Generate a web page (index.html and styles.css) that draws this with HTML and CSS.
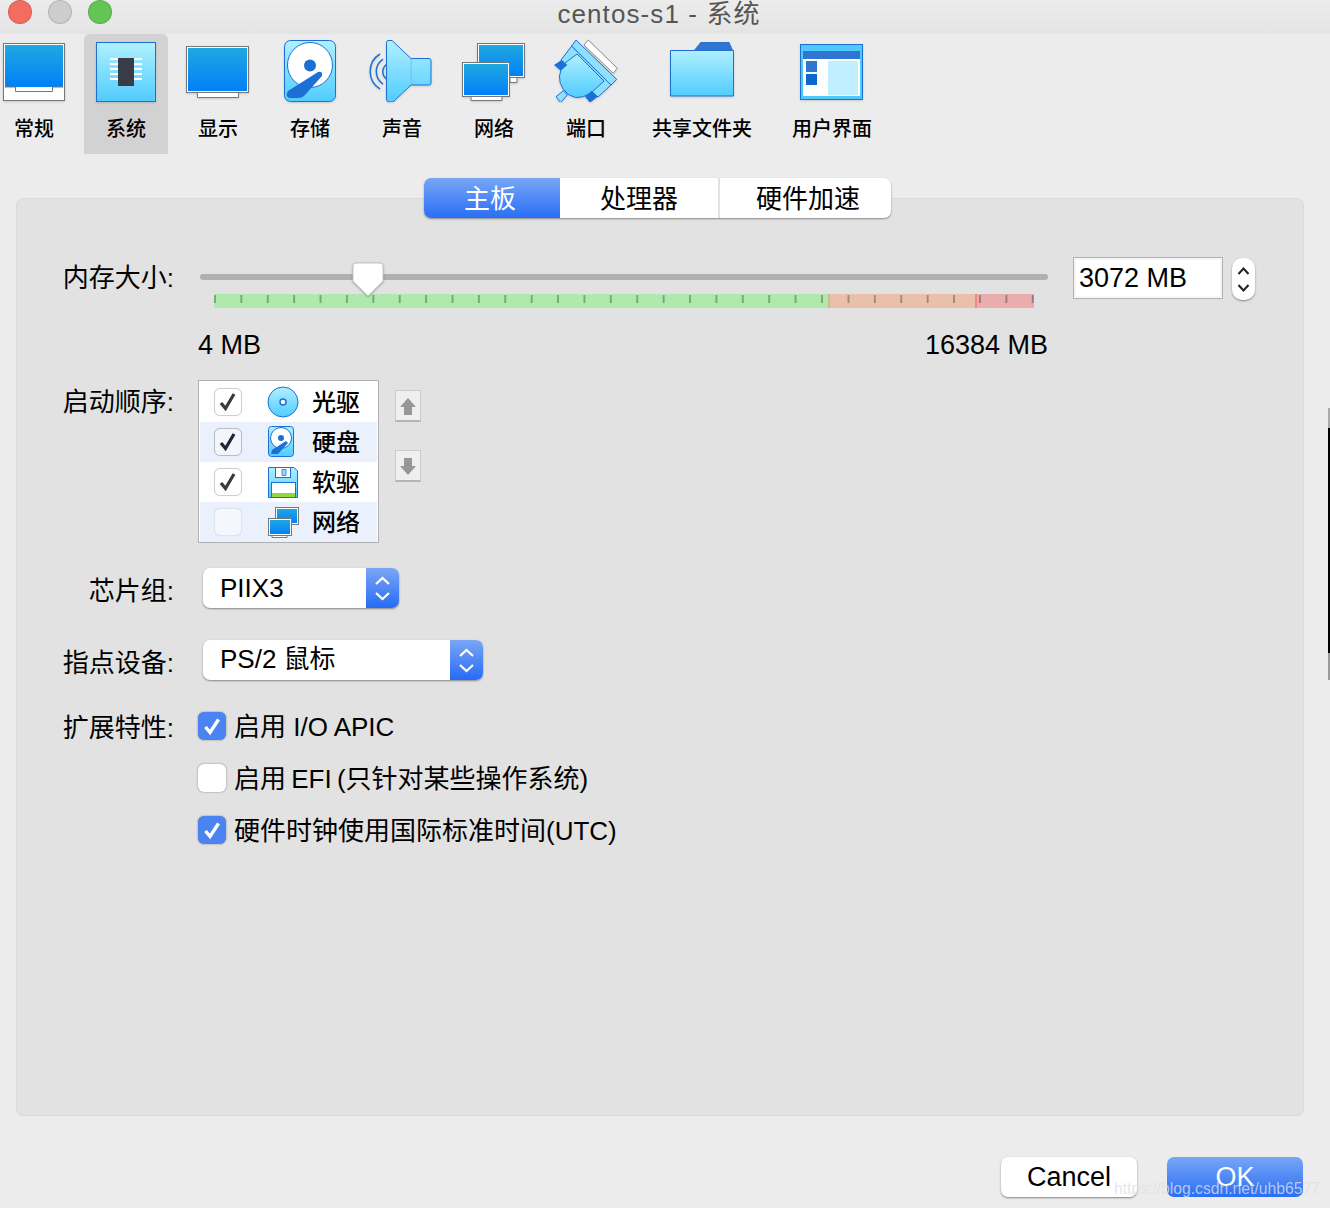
FILE: index.html
```html
<!DOCTYPE html>
<html lang="zh">
<head>
<meta charset="utf-8">
<title>centos-s1 - 系统</title>
<link rel="stylesheet" href="styles.css">
</head>
<body>
<div class="window">
  <header class="titlebar">
    <div class="lights"><i class="light red"></i><i class="light gray"></i><i class="light green"></i></div>
    <div class="title">centos-s1 - 系统</div>
  </header>

  <nav class="toolbar">
    <div class="tool">
      <svg class="ticon" viewBox="0 0 84 68"><defs><linearGradient id="scr" x1="0" y1="0" x2="0" y2="1"><stop offset="0" stop-color="#20a8e0"/><stop offset="1" stop-color="#0080f8"/></linearGradient></defs>
        <rect x="11.500" y="9.500" width="61" height="57" fill="#fff" stroke="#777"/><rect x="13" y="11" width="58" height="42" fill="url(#scr)"/><path d="M13 53H23.500V57.500H60.500V53H71" fill="none" stroke="#777"/></svg>
      <span>常规</span>
    </div>
    <div class="tool active">
      <svg class="ticon" viewBox="0 0 84 68"><defs><linearGradient id="lb" x1="0" y1="0" x2="0" y2="1"><stop offset="0" stop-color="#b0f0ff"/><stop offset="1" stop-color="#50ccff"/></linearGradient></defs>
        <rect x="12.500" y="8.500" width="59" height="59" fill="url(#lb)" stroke="#1c6fd4"/>
        <path d="M26 25H58M26 30H58M26 35H58M26 40H58M26 45H58" stroke="#fff" stroke-width="2"/><rect x="34" y="24" width="16" height="28" fill="#383c46"/></svg>
      <span>系统</span>
    </div>
    <div class="tool">
      <svg class="ticon" viewBox="0 0 84 68"><path d="M21.500 58.500V63.500H62.500V58.500" fill="#fff" stroke="#777"/><rect x="10.500" y="12.500" width="62" height="46" fill="#fff" stroke="#777"/><rect x="12" y="14" width="59" height="43" fill="url(#scr)"/></svg>
      <span>显示</span>
    </div>
    <div class="tool">
      <svg class="ticon" viewBox="0 0 84 68"><rect x="16.500" y="6.500" width="51" height="61" rx="6" fill="url(#lb)" stroke="#1c6fd4"/><circle cx="42" cy="31" r="22.500" fill="#fff" stroke="#1c6fd4"/><circle cx="42" cy="31.500" r="6" fill="#1c6fd4"/><path d="M21 64Q17 62 20 57L50 38Q55 37 54 42L36 62Q34 64 30 64Z" fill="#1c6fd4"/></svg>
      <span>存储</span>
    </div>
    <div class="tool">
      <svg class="ticon" viewBox="0 0 84 68"><path d="M28 6.500L32 6.500L51 24.500H69Q71 24.500 71 26.500V49Q71 51 69 51H51L33 68L29 68Q26.500 67.500 26.500 65.500V8.500Q26.500 7 28 6.500Z" fill="url(#lb)" stroke="#1c6fd4"/><path d="M51 24.500V51" stroke="#6fc0ee"/><path d="M20 20A20.500 20.500 0 0 0 20 55M23 25A15 15 0 0 0 23 50M26.500 30.500A9 9 0 0 0 26.500 45" fill="none" stroke="#1c6fd4" stroke-width="1.500"/></svg>
      <span>声音</span>
    </div>
    <div class="tool">
      <svg class="ticon" viewBox="0 0 84 68"><path d="M58 43.500V48.500H65V43.500" fill="#fff" stroke="#777"/><rect x="25.500" y="9.500" width="47" height="34" fill="#fff" stroke="#777"/><rect x="27" y="11" width="44" height="31" fill="url(#scr)"/><path d="M19 62.500V66.500H50V62.500" fill="#fff" stroke="#777"/><rect x="10.500" y="28.500" width="47" height="34" fill="#fff" stroke="#777"/><rect x="12" y="30" width="44" height="31" fill="url(#scr)"/></svg>
      <span>网络</span>
    </div>
    <div class="tool">
      <svg class="ticon" viewBox="0 0 84 68"><path d="M44.300 6L73.300 34.300L69.300 39.300L40 11Z" fill="#fff" stroke="#8a8a8a"/><path d="M12 62.700L19.300 56.700L23.300 61L16.700 68.500Z" fill="#8fe0ff" stroke="#1c6fd4"/><path d="M17 26L27.700 12L67 51L54 63L46 56L23 36Z" fill="#8fe0ff" stroke="#1c6fd4"/><path d="M33 20L60 47L47 59Q30 70 19 55Q11 42 21 29Z" fill="url(#lb)" stroke="#1c6fd4"/><path d="M32 6L72.700 45.300L67 51L27.700 12Z" fill="#8fe0ff" stroke="#1c6fd4"/><path d="M10 31L17.700 26L23.300 31L16.700 36.700ZM41 62.700L47.700 56.700L53.700 62.700L46 68.700Z" fill="#1c6fd4"/></svg>
      <span>端口</span>
    </div>
    <div class="tool">
      <svg class="ticon" viewBox="0 0 132 68"><path d="M57 17.500L64.700 8H93.300L97.500 17.500Z" fill="#2f76d2"/><path d="M34.500 16.500H97.500V62H34.500Z" fill="url(#lb)" stroke="#1c6fd4"/></svg>
      <span>共享文件夹</span>
    </div>
    <div class="tool">
      <svg class="ticon" viewBox="0 0 112 68"><rect x="24.500" y="10.500" width="62" height="55" fill="#50c8fa" stroke="#1c6fd4"/><rect x="27" y="17" width="57" height="45" fill="#fff"/><rect x="27" y="17" width="57" height="8" fill="#2f76d2"/><rect x="30" y="27" width="11" height="11" fill="#2f76d2"/><rect x="30" y="40" width="11" height="11" fill="#0c66d0"/><rect x="52" y="27" width="30" height="34" fill="#c0f0ff"/></svg>
      <span>用户界面</span>
    </div>
  </nav>

  <section class="panel">
    <div class="tabs">
      <div class="tab sel">主板</div>
      <div class="tab t2">处理器</div>
      <div class="tab t3">硬件加速</div>
    </div>

    <div class="form">
      <div class="row mem">
        <label class="lbl">内存大小:</label>
        <div class="mem-body">
          <div class="slider">
            <div class="track"></div>
            <svg class="thumb" viewBox="0 0 32 36"><path d="M1 4Q1 1 4 1H28Q31 1 31 4V19L16 34L1 19Z" fill="#fff" stroke="#c4c4c4"/></svg>
            <div class="zones"><i class="z g"></i><i class="z o"></i><i class="z r"></i></div>
          </div>
          <div class="spin">
            <div class="field">3072 MB</div>
            <div class="stepper"><svg viewBox="0 0 23 42"><path d="M6.500 16L11.500 10.500L16.500 16M6.500 27L11.500 32.500L16.500 27" fill="none" stroke="#222" stroke-width="2"/></svg></div>
          </div>
        </div>
      </div>
      <div class="range"><span>4 MB</span><span>16384 MB</span></div>

      <div class="row boot">
        <label class="lbl">启动顺序:</label>
        <div class="bootlist">
          <div class="bootrow"><i class="cb"><svg viewBox="0 0 28 28"><path d="M7 15L11.500 20.500L20 6" fill="none" stroke="#3a3a40" stroke-width="3.200"/></svg></i>
            <svg class="bi" viewBox="0 0 32 32"><defs><linearGradient id="lb2" x1="0" y1="0" x2="0" y2="1"><stop offset="0" stop-color="#b0f0ff"/><stop offset="1" stop-color="#50ccff"/></linearGradient></defs><circle cx="16" cy="16" r="15" fill="url(#lb2)" stroke="#1c6fd4"/><circle cx="16" cy="16" r="3" fill="#fff" stroke="#1c6fd4" stroke-width="1.500"/></svg><span>光驱</span></div>
          <div class="bootrow alt"><i class="cb dark"><svg viewBox="0 0 28 28"><path d="M7 15L11.500 20.500L20 6" fill="none" stroke="#22253a" stroke-width="3.200"/></svg></i>
            <svg class="bi" viewBox="0 0 32 32"><rect x="1.500" y="0.500" width="25" height="30" rx="3" fill="url(#lb2)" stroke="#1c6fd4"/><circle cx="14" cy="12" r="10.500" fill="#fff" stroke="#1c6fd4"/><circle cx="14" cy="12" r="3" fill="#1c6fd4"/><path d="M4 28L5 24L19 15L21 17L11 28Z" fill="#1c6fd4"/></svg><span>硬盘</span></div>
          <div class="bootrow"><i class="cb"><svg viewBox="0 0 28 28"><path d="M7 15L11.500 20.500L20 6" fill="none" stroke="#3a3a40" stroke-width="3.200"/></svg></i>
            <svg class="bi" viewBox="0 0 32 32"><path d="M1.500 1.500H27L30.500 5V31.500H1.500Z" fill="url(#lb2)" stroke="#1c6fd4"/><rect x="8.500" y="1.500" width="15" height="10" fill="#fff" stroke="#1c6fd4"/><rect x="15" y="3.500" width="4" height="6" fill="#90d8f8" stroke="#1c6fd4" stroke-width=".7"/><rect x="4.500" y="16.500" width="24" height="15" fill="#fff" stroke="#1c6fd4"/><rect x="5" y="27" width="23" height="4" fill="#90d840"/></svg><span>软驱</span></div>
          <div class="bootrow alt"><i class="cb off"></i>
            <svg class="bi" viewBox="0 0 32 32"><rect x="8.500" y="1.500" width="23" height="17" fill="#fff" stroke="#777"/><rect x="10" y="3" width="20" height="14" fill="url(#scr)"/><path d="M5 29.500V31.500H20V29.500" fill="#fff" stroke="#777"/><rect x="1.500" y="12.500" width="23" height="17" fill="#fff" stroke="#777"/><rect x="3" y="14" width="20" height="14" fill="url(#scr)"/></svg><span>网络</span></div>
        </div>
        <div class="movers">
          <div class="mover"><svg viewBox="0 0 24 30"><path d="M12 7L20 16H16V24H8V16H4Z" fill="#97979a"/></svg></div>
          <div class="mover"><svg viewBox="0 0 24 30"><path d="M12 24L20 15H16V7H8V15H4Z" fill="#97979a"/></svg></div>
        </div>
      </div>

      <div class="row sel1">
        <label class="lbl">芯片组:</label>
        <div class="select s-chip"><span>PIIX3</span><b class="arrows"><svg viewBox="0 0 33 40"><path d="M10 16L16.500 10L23 16M10 25L16.500 31L23 25" fill="none" stroke="#fff" stroke-width="2.200"/></svg></b></div>
      </div>
      <div class="row sel2">
        <label class="lbl">指点设备:</label>
        <div class="select s-mouse"><span>PS/2 鼠标</span><b class="arrows"><svg viewBox="0 0 33 40"><path d="M10 16L16.500 10L23 16M10 25L16.500 31L23 25" fill="none" stroke="#fff" stroke-width="2.200"/></svg></b></div>
      </div>

      <div class="row ext">
        <label class="lbl">扩展特性:</label>
        <div class="checks">
          <div class="check"><i class="box on"><svg viewBox="0 0 28 28"><path d="M7.500 15L12 20.500L20.500 7.500" fill="none" stroke="#fff" stroke-width="3.400"/></svg></i><span>启用 I/O APIC</span></div>
          <div class="check"><i class="box"></i><span class="tight">启用 EFI (只针对某些操作系统)</span></div>
          <div class="check"><i class="box on"><svg viewBox="0 0 28 28"><path d="M7.500 15L12 20.500L20.500 7.500" fill="none" stroke="#fff" stroke-width="3.400"/></svg></i><span>硬件时钟使用国际标准时间(UTC)</span></div>
        </div>
      </div>
    </div>
  </section>

  <footer class="actions">
    <div class="btn">Cancel</div>
    <div class="btn primary">OK</div>
  </footer>
  <div class="watermark">https://blog.csdn.net/uhb6577</div>
  <i class="edge"></i>
</div>
</body>
</html>
```
FILE: styles.css
```css
* { box-sizing: border-box; }
html, body { margin: 0; padding: 0; }
body { width: 1330px; height: 1208px; overflow: hidden; background: #ececec; font-family: "Liberation Sans", "Noto Sans CJK SC", sans-serif; font-weight: 400; color: #000; }
.window { position: relative; width: 1330px; height: 1208px; display: flex; flex-direction: column; }
svg { display: block; }
i, b { display: block; font-style: normal; font-weight: 400; }

.titlebar { position: relative; height: 34px; flex: none; background: linear-gradient(#ececec, #e4e4e4); display: flex; justify-content: center; }
.lights { position: absolute; left: 8px; top: 0; display: flex; gap: 16px; }
.light { width: 24px; height: 24px; border-radius: 50%; border: 1px solid rgba(0,0,0,.12); }
.red { background: #f26d60; }
.gray { background: #cdcdcd; }
.green { background: #62c554; }
.title { font-size: 26px; line-height: 28px; color: #555; letter-spacing: 1.100px; margin-right: 12px; }

.toolbar { display: flex; gap: 8px; margin-left: -8px; height: 120px; flex: none; }
.tool { min-width: 84px; padding: 0 16px; height: 120px; display: flex; flex-direction: column; align-items: center; font-size: 20px; font-weight: 500; border-radius: 6px 6px 0 0; }
.tool span { margin-top: 13px; line-height: 28px; white-space: nowrap; }
.tool.active { background: #d2d2d2; }
.ticon { width: 84px; height: 68px; margin: 0 -16px; flex: none; filter: drop-shadow(0 1px 1px rgba(0,0,0,.14)); }
.tool:nth-child(8) .ticon { width: 132px; }
.tool:nth-child(9) .ticon { width: 112px; }

.panel { margin: 44px 26px 0 16px; height: 918px; flex: none; background: #e2e2e2; border: 1px solid #dadada; border-radius: 7px; display: flex; flex-direction: column; }
.tabs { display: flex; margin: -21px 0 0 407px; width: 467px; height: 40px; background: #fff; border-radius: 7px; box-shadow: 0 1px 2px rgba(0,0,0,.4); font-size: 26px; line-height: 42px; text-align: center; flex: none; }
.tab { height: 40px; }
.tab.sel { width: 136px; padding-right: 4px; color: #fff; background: linear-gradient(#78a6f6, #2a6ef5); border-radius: 7px 0 0 7px; }
.tab.t2 { width: 160px; border-right: 2px solid #e2e2e2; }
.tab.t3 { flex: 1; padding-left: 5px; }

.form { padding-left: 45px; }
.row { display: flex; }
.lbl { width: 112px; flex: none; text-align: right; font-size: 26px; line-height: 34px; white-space: nowrap; margin-right: 24px; }

.mem { margin-top: 40px; }
.mem .lbl { margin-top: 3px; }
.mem-body { display: flex; align-items: flex-start; }
.slider { position: relative; width: 848px; margin-left: 2px; margin-top: 16px; height: 34px; }
.track { height: 6px; background: #b0b0b0; border-radius: 3px; }
.thumb { position: absolute; left: 152px; top: -12px; width: 32px; height: 36px; filter: drop-shadow(0 1px 1px rgba(0,0,0,.25)); }
.zones { display: flex; height: 14px; margin: 14px 14px 0 14px; width: 820px; }
.z { height: 14px; background-repeat: repeat-x; background-position: 0 1px; background-size: 26.4px 8px; }
.g { width: 614px; background-color: #afe9ae; background-image: linear-gradient(90deg, #7aa87b 1.500px, transparent 1.500px); }
.o { width: 147px; background-color: #eac0ab; border-left: 2px solid #c4c08a; background-image: linear-gradient(90deg, #a08a80 1.500px, transparent 1.500px); background-position: 17.500px 1px; }
.r { width: 59px; background-color: #ebacad; border-left: 2px solid #f08a80; background-image: linear-gradient(90deg, #a07a7c 1.500px, transparent 1.500px); background-position: 2px 1px; }
.spin { display: flex; margin-left: 25px; margin-top: -1px; gap: 9px; }
.field { width: 150px; height: 42px; background: #fff; border: 1px solid #b2b2b2; font-size: 27px; line-height: 40px; padding-left: 5px; box-shadow: inset 0 0 0 2px #f6f6f6; }
.stepper { width: 23px; height: 42px; margin-top: 1px; background: #fff; border-radius: 10px; box-shadow: 0 1px 2px rgba(0,0,0,.4); }

.range { display: flex; justify-content: space-between; width: 850px; margin-left: 136px; margin-top: 20px; font-size: 27px; line-height: 34px; }

.boot { margin-top: 18px; }
.boot .lbl { margin-top: 5px; }
.bootlist { width: 181px; height: 163px; background: #fff; border: 1px solid #b0b0b0; padding: 1px 1px 0; }
.bootrow { height: 40px; display: flex; align-items: center; padding-left: 14px; font-size: 24px; font-weight: 500; }
.bootrow.alt { background: #ebf1fc; }
.cb { width: 28px; height: 28px; border-radius: 6px; border: 1px solid #cfcfcf; background: #fff; box-shadow: 0 0 1px rgba(0,0,0,.1); flex: none; }
.cb svg { margin: -1px; width: 28px; height: 28px; }
.cb.dark { background: #f3f5fb; border-color: #b8bcc6; }
.cb.off { background: #f4f7fd; border-color: #dfe3ea; }
.bi { width: 32px; height: 32px; margin-left: 25px; flex: none; }
.bootrow span { margin-left: 13px; margin-top: 2px; line-height: 40px; }
.movers { margin-left: 16px; margin-top: 10px; display: flex; flex-direction: column; gap: 28px; }
.mover { width: 26px; height: 32px; background: #efefef; border: 1px solid #cbcbcb; border-bottom: 2px solid #b5b5b5; }
.mover svg { width: 24px; height: 30px; }

.sel1 { margin-top: 25px; }
.sel2 { margin-top: 32px; }
.sel1 .lbl, .sel2 .lbl { margin-top: 6px; margin-right: 29px; }
.select { height: 40px; background: #fff; border-radius: 7px; box-shadow: 0 1px 2px rgba(0,0,0,.4); display: flex; justify-content: space-between; font-size: 26px; line-height: 39px; padding-left: 17px; overflow: hidden; }
.s-chip { width: 196px; line-height: 41px; }
.s-mouse { width: 280px; }
.arrows { width: 33px; height: 40px; background: linear-gradient(#7ba6f5, #266bf6); }

.ext { margin-top: 32px; }
.ext .lbl { margin-top: -1px; }
.checks { display: flex; flex-direction: column; gap: 24px; }
.check { display: flex; align-items: center; height: 28px; font-size: 26px; gap: 8px; white-space: nowrap; }
.check span { margin-bottom: 4px; }
.check .tight { word-spacing: -2px; }
.box { width: 28px; height: 28px; border-radius: 6px; background: #fff; box-shadow: 0 0 2px rgba(0,0,0,.45); flex: none; }
.box.on { background: #4c83f2; }

.actions { display: flex; justify-content: flex-end; gap: 30px; margin: 41px 27px 0 0; flex: none; }
.btn { width: 136px; height: 40px; border-radius: 7px; background: #fff; box-shadow: 0 1px 2px rgba(0,0,0,.45); text-align: center; font-size: 27px; line-height: 40px; }
.btn.primary { color: #fff; background: linear-gradient(#78a6f6, #2a6ef5); box-shadow: none; }
.watermark { position: absolute; left: 1114px; top: 1179px; font-size: 15.700px; line-height: 20px; color: rgba(222,222,228,.78); white-space: nowrap; }
.edge { position: absolute; right: 0; top: 408px; width: 2px; height: 272px; background: linear-gradient(#aaa 0, #aaa 20px, #000 20px, #000 245px, #999 245px, #999 100%); }
```
